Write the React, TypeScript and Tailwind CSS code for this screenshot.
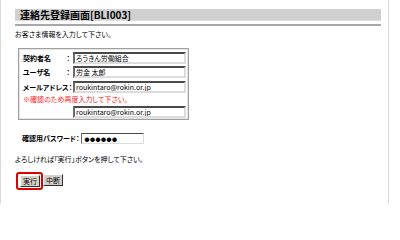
import React from "react";

const inputBox =
  "h-[12px] bg-white border-2 border-t-[#4a4a4a] border-l-[#6a6a6a] border-b-[#dcdcdc] border-r-[#dcdcdc] px-[1px] text-[7px] leading-[8px] text-black whitespace-nowrap overflow-hidden";

function Row({ label, value }: { label: string; value: string }) {
  return (
    <div className="flex items-center h-[12px]">
      <div className="w-[50px] flex justify-between font-bold text-[7px] leading-[12px] whitespace-nowrap">
        <span>{label}</span>
        <span className="pr-[3px]">：</span>
      </div>
      <div className={`${inputBox} w-[113px]`}>{value}</div>
    </div>
  );
}

function Button({ label }: { label: string }) {
  return (
    <button className="flex items-center justify-center p-0 h-[12px] w-[20px] bg-[#d4d0c8] border border-t-white border-l-white border-b-[#303030] border-r-[#303030] text-[7px] leading-[10px] text-black">
      {label}
    </button>
  );
}

export default function App() {
  return (
    <div
      className="w-[400px] h-[204px] bg-white text-black overflow-hidden"
      style={{ fontFamily: '"Noto Sans CJK JP", "Liberation Sans", sans-serif', fontFeatureSettings: '"palt"' }}
    >
      <div className="w-[389px] h-full border-l border-r border-[#dadada] pt-[9px] pl-[14px]">
        {/* Title */}
        <div className="w-[366px] h-[12px] bg-[#d0d0d0] border-b border-[#dedede] pl-[5px] font-bold text-[10px] leading-[12px]">
          連絡先登録画面[BLI003]
        </div>
        <div className="mt-[3px] w-[366px] h-[2px] bg-[#a8a8a8]" />

        <p className="mt-[3px] text-[7px] leading-[10px]">お客さま情報を入力して下さい。</p>

        {/* Contact form */}
        <div className="mt-[9px] ml-[3px] w-[171px] h-[72px] border border-[#a0a0a0] shadow-[inset_1px_1px_0_#e4e4e4,inset_-1px_-1px_0_#e4e4e4] pt-[3px] pl-[4px] flex flex-col">
          <Row label="契約者名" value="ろうきん労働組合" />
          <div className="mt-[2px]">
            <Row label="ユーザ名" value="労金 太郎" />
          </div>
          <div className="mt-[3px]">
            <Row label="メールアドレス" value="roukintaro@rokin.or.jp" />
          </div>
          <p className="mt-[1px] text-[7px] leading-[10px] text-[#ff2020] whitespace-nowrap">※確認のため再度入力して下さい。</p>
          <div className="mt-[2px] ml-[50px]">
            <div className={`${inputBox} w-[113px]`}>roukintaro@rokin.or.jp</div>
          </div>
        </div>

        {/* Password */}
        <div className="mt-[13px] ml-[7px] flex items-center h-[11px]">
          <span className="font-bold text-[7px] leading-[11px] whitespace-nowrap">確認用パスワード：</span>
          <div className="ml-[2px] h-[11px] w-[63px] bg-white border border-t-[#4a4a4a] border-l-[#6a6a6a] border-b-[#dcdcdc] border-r-[#dcdcdc] pl-[2px] text-[5px] leading-[9px] tracking-[0.5px]">
            ●●●●●●
          </div>
        </div>

        <p className="mt-[10px] text-[7px] leading-[10px] whitespace-nowrap">よろしければ「実行」ボタンを押して下さい。</p>

        {/* Buttons */}
        <div className="mt-[8px] ml-[1px] flex items-start">
          <div className="flex border-2 border-[#e00000] rounded-[3px] p-[1px] pl-[2px]">
            <Button label="実行" />
          </div>
          <div className="mt-[2px]">
            <Button label="中断" />
          </div>
        </div>
      </div>
    </div>
  );
}
